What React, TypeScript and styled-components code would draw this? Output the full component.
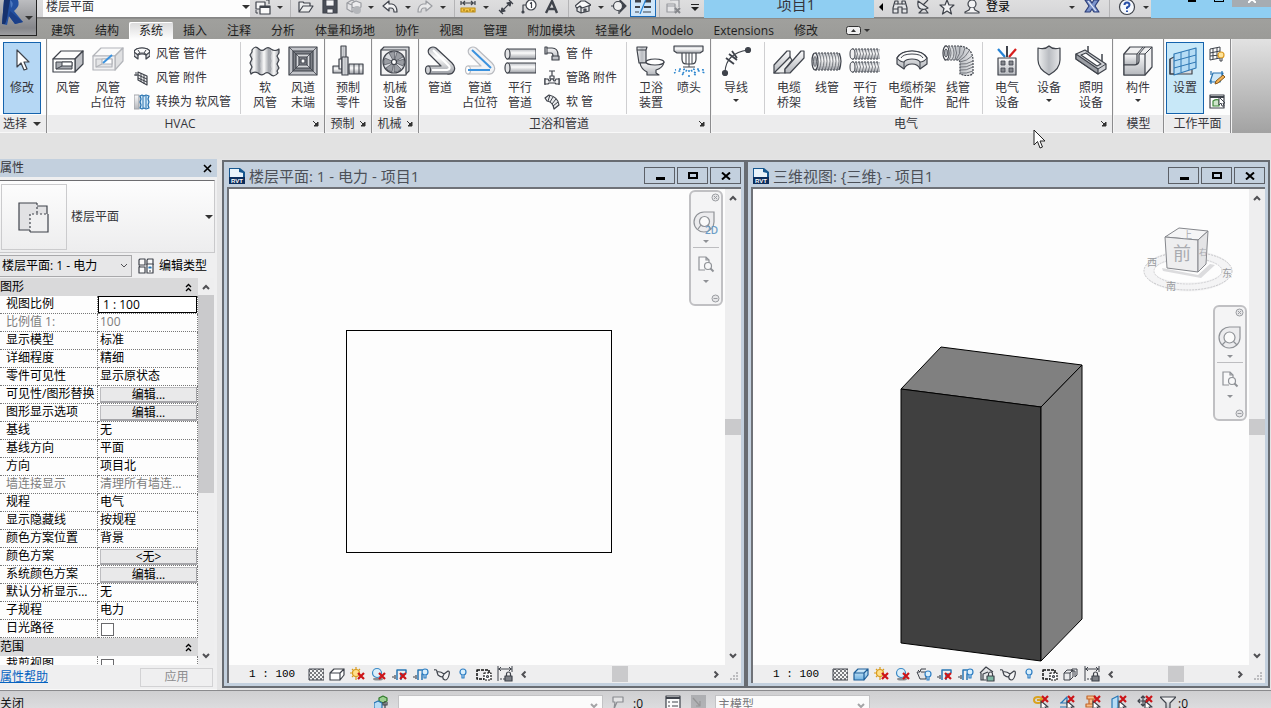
import React from "react";
import styled, { createGlobalStyle } from "styled-components";

const INK = "#3f434b";
const FRAME = "#c3d0de";

const Global = createGlobalStyle`
  * { box-sizing: border-box; }
  body {
    margin: 0;
    overflow: hidden;
    font-family: "Open Sans", "Noto Sans CJK SC", sans-serif;
    font-size: 12px;
    line-height: 16px;
    color: #35353b;
    background: #e4e4e5;
  }
  button, input, select { font: inherit; color: inherit; margin: 0; padding: 0; border: 0; background: none; border-radius: 0; }
  button { cursor: default; }
  svg { display: block; flex: none; }
`;

/* ---------- shared drawing helpers ---------- */

type KidsProps = { children?: React.ReactNode };

const Ico = ({ s = 16, children }: KidsProps & { s?: number }) => (
  <svg width={s} height={s} viewBox={`0 0 ${s} ${s}`} fill="none" stroke={INK} strokeWidth="1.2" strokeLinejoin="round" aria-hidden="true">
    {children}
  </svg>
);

const Defs = styled.svg`
  position: absolute;
`;

const Gradients = () => (
  <Defs width="0" height="0" aria-hidden="true">
    <defs>
      <linearGradient id="steel" x1="0" y1="0" x2="0" y2="1">
        <stop offset="0" stopColor="#fafafb" />
        <stop offset="1" stopColor="#b4b7bc" />
      </linearGradient>
      <linearGradient id="tube" x1="0" y1="0" x2="0" y2="1">
        <stop offset="0" stopColor="#b9bcc1" />
        <stop offset="0.4" stopColor="#fcfcfc" />
        <stop offset="1" stopColor="#9a9da3" />
      </linearGradient>
      <linearGradient id="steelSide" x1="0" y1="0" x2="1" y2="0">
        <stop offset="0" stopColor="#eeeff0" />
        <stop offset="0.5" stopColor="#b9bcc1" />
        <stop offset="1" stopColor="#e6e7e9" />
      </linearGradient>
      <linearGradient id="bands" x1="0" y1="0" x2="10" y2="0" gradientUnits="userSpaceOnUse" spreadMethod="repeat">
        <stop offset="0" stopColor="#9fa2a8" />
        <stop offset="0.5" stopColor="#fbfbfb" />
        <stop offset="1" stopColor="#9fa2a8" />
      </linearGradient>
      <linearGradient id="sky" x1="0" y1="0" x2="0" y2="1">
        <stop offset="0" stopColor="#dcf0fb" />
        <stop offset="1" stopColor="#6fb2e2" />
      </linearGradient>
      <pattern id="hatch" width="4" height="4" patternUnits="userSpaceOnUse">
        <rect width="4" height="4" fill="#f4f4f4" />
        <path d="M0 0h2v2H0zM2 2h2v2H2z" fill="#7a7c80" stroke="none" />
      </pattern>
    </defs>
  </Defs>
);

const RedCross = ({ x, y }: { x: number; y: number }) => (
  <path d={`M${x} ${y}l6 6M${x + 6} ${y}l-6 6`} stroke="#cc1418" strokeWidth="2.2" />
);
const Bulb = ({ x, y }: { x: number; y: number }) => (
  <g stroke="#2f7fc4" fill="#d9effc">
    <circle cx={x} cy={y} r="3" />
    <path d={`M${x - 1} ${y + 3}v3h2v-3`} />
  </g>
);
const Lock = ({ x, y, c = "#7d8086" }: { x: number; y: number; c?: string }) => (
  <g>
    <path d={`M${x + 1.5} ${y + 3}v-2a2 2 0 0 1 4 0v2`} />
    <rect x={x} y={y + 3} width="7" height="5" fill={c} />
  </g>
);

/* ---------- large ribbon icons (32 px) ---------- */

const L = {
  cursor: (
    <Ico s={32}>
      <path d="M11 5v17l4-4 3 7 3-1-3-7h5z" fill="#fff" />
    </Ico>
  ),
  duct: (
    <Ico s={32}>
      <path d="M1 14l8-8h22l-8 8z" fill="#fdfdfd" />
      <path d="M31 6v13l-8 8V14z" fill="#c0c2c7" />
      <path d="M1 14h22v13H1z" fill="#fdfdfd" />
      <path d="M4 17h16v7H4z" fill="#a9acb2" strokeWidth="1" />
      <path d="M10 17h10v4H10z" fill="#fff" strokeWidth="1" />
      <path d="M4 24l6-3" strokeWidth="1" />
    </Ico>
  ),
  ductPh: (
    <Ico s={32}>
      <g stroke="#b2b4b9">
        <path d="M1 11l8-8h22l-8 8z" fill="#fafafa" />
        <path d="M31 3v13l-8 9V11z" fill="#dfe0e2" />
        <path d="M1 11h22v14H1z" fill="#f1f1f2" />
        <path d="M4 14h16v8H4z" fill="#e4e5e7" />
        <path d="M10 14h10v5H10zM4 22l6-3" fill="#fff" />
      </g>
      <path d="M11 18l9-8" stroke="#3b92de" strokeWidth="2" />
    </Ico>
  ),
  flexDuct: (
    <Ico s={32}>
      <path
        d="M3 5q3-5 7-1 3 3 6 0 3-3 6 0 4 3 8 0v4l-2 3 2 4-2 4 2 4-2 3 1 2q-4 5-8 1-3-3-6 0-3 2-6-1-4-2-7 1l-1-3 2-4-2-4 2-4-2-4 2-3z"
        fill="url(#bands)"
      />
      <path d="M10 5l1 3-1 4 1 4-1 4 1 4-1 3M21 5l1 3-1 4 1 4-1 4 1 4-1 3" stroke="#a1a4aa" strokeWidth="1" />
    </Ico>
  ),
  terminal: (
    <Ico s={32}>
      <rect x="2" y="2" width="28" height="28" fill="#c3c5ca" />
      <rect x="6" y="6" width="20" height="20" fill="#7d8087" />
      <rect x="9" y="9" width="14" height="14" fill="#d6d8db" />
      <rect x="12" y="12" width="8" height="8" fill="#8a8d94" />
      <rect x="14" y="14" width="4" height="4" fill="#fff" />
      <path d="M2 2l10 10M30 2L20 12M2 30l10-10M30 30L20 20" strokeWidth=".8" />
    </Ico>
  ),
  fab: (
    <Ico s={32}>
      <path d="M9 1h5v14H9z" fill="url(#steelSide)" />
      <path d="M1 21h9v7H1z" fill="url(#tube)" />
      <path d="M17 19h14v10H17z" fill="url(#tube)" />
      <path d="M7 14h3v10H7z" fill="#f0f0f1" />
      <path d="M10 12h6v18h-6z" fill="url(#steelSide)" />
      <path d="M22 19v10M27 19v10" strokeWidth="1" />
    </Ico>
  ),
  fan: (
    <Ico s={32}>
      <path d="M2 5l3-3h25v24l-4 4H2z" fill="#d3d5d8" />
      <rect x="2" y="5" width="25" height="25" fill="#f2f2f3" />
      <circle cx="15" cy="17" r="11" fill="#dadce0" />
      <g fill="#9a9da3" strokeWidth=".6">
        <path d="M15 17L10 8q4-2 6-1z" />
        <path d="M15 17l3-10q5 1 6 5z" />
        <path d="M15 17l10-3q1 4-1 7z" />
        <path d="M15 17l7 7q-3 4-7 3z" />
        <path d="M15 17l-2 10q-4-1-6-4z" />
        <path d="M15 17L5 20q-1-5 1-7z" />
      </g>
      <circle cx="15" cy="17" r="2.500" fill="#fff" />
    </Ico>
  ),
  pipe: (
    <Ico s={32}>
      <path d="M5 9q-2-4 1-6t6 0l16 15q4 4 2 8t-7 3H4v-8h13z" fill="url(#tube)" />
      <path d="M9 5l16 16q2 3-2 4H8" stroke="#fff" strokeWidth="2" />
      <ellipse cx="4" cy="25" rx="2.500" ry="4" fill="#d0d2d6" />
    </Ico>
  ),
  pipePh: (
    <Ico s={32}>
      <g stroke="#b9bbc0">
        <path d="M5 9q-2-4 1-6t6 0l16 15q4 4 2 8t-7 3H4v-8h13z" fill="#f1f2f4" />
        <ellipse cx="4" cy="25" rx="2.500" ry="4" fill="#fff" />
      </g>
      <path d="M8 5l19 18M4 25h22" stroke="#3b92de" strokeWidth="2" />
    </Ico>
  ),
  parallelPipe: (
    <Ico s={32}>
      <path d="M3 4h29v10H3z" fill="url(#tube)" />
      <ellipse cx="3.500" cy="9" rx="2.500" ry="5" fill="#e3e4e6" />
      <path d="M3 18h29v10H3z" fill="url(#tube)" />
      <ellipse cx="3.500" cy="23" rx="2.500" ry="5" fill="#e3e4e6" />
    </Ico>
  ),
  toilet: (
    <Ico s={32}>
      <path d="M2 2h10l-1 3v13H4L2 5z" fill="url(#steelSide)" />
      <path d="M2 5h9" strokeWidth="1" />
      <path d="M5 18h7l17-1q-1 6-8 8v3l3 2H12v-3q-6-3-7-9z" fill="url(#steel)" />
      <ellipse cx="20" cy="17" rx="9" ry="3" fill="#fff" />
    </Ico>
  ),
  sprinkler: (
    <Ico s={32}>
      <path d="M1 1h29v5l-3 2H4L1 6z" fill="url(#tube)" />
      <path d="M9 8v6q0 5 4 5h6q4 0 4-5V8" />
      <path d="M13 8v11M19 8v11M16 8v14M10 22h12" strokeWidth="1" />
      <g stroke="#2c86cf" strokeWidth="1.500" strokeDasharray="2 3">
        <path d="M12 24L1 28M14 25l-7 7M16 25v7M18 25l6 7M20 24l12 4M8 24l-6 1M24 24l7 1M11 27l-3 3M21 27l4 2" />
      </g>
    </Ico>
  ),
  wire: (
    <Ico s={32}>
      <path d="M5 27Q6 8 28 5" />
      <circle cx="5" cy="28" r="2.500" fill={INK} />
      <circle cx="28" cy="5" r="2.500" fill={INK} />
      <path d="M6 13l8 6M9 9l8 6M12 6l5 7" strokeWidth="1.800" />
    </Ico>
  ),
  tray: (
    <Ico s={32}>
      <path d="M1 20L14 6h3v6L6 24v4H1z" fill="url(#steel)" />
      <path d="M6 23l11-11 2 3-7 9v4H1z" fill="#eceded" />
      <path d="M14 22L28 6h3v7L17 28h-5v-4z" fill="url(#steel)" />
    </Ico>
  ),
  conduit: (
    <Ico s={32}>
      <rect x="3" y="8" width="27" height="17" rx="2" fill="url(#tube)" stroke="none" />
      <path d="M4 8h24M4 25h24" strokeDasharray="2 1" />
      <g strokeWidth=".9" stroke="#6a6d74">
        {[8, 11, 14, 17, 20, 23, 26].map((x) => (
          <path key={x} d={`M${x} 8q4 8 0 17`} />
        ))}
      </g>
      <path d="M28 8q4 8 0 17" />
      <ellipse cx="4" cy="16.500" rx="3" ry="8.500" fill="#f0f0f1" />
      <ellipse cx="4" cy="16.500" rx="1.500" ry="5" fill="#b4b7bc" strokeWidth=".8" />
    </Ico>
  ),
  parallelConduit: (
    <Ico s={32}>
      {[4, 17].map((y) => (
        <g key={y} strokeWidth="1">
          <rect x="3" y={y} width="28" height="10" fill="url(#tube)" stroke="none" />
          <path d={`M3 ${y}h27M3 ${y + 10}h27`} strokeDasharray="2 1" />
          {[7, 10, 13, 16, 19, 22, 25, 28].map((x) => (
            <path key={x} d={`M${x} ${y}q3 5 0 10`} stroke="#6a6d74" strokeWidth=".9" />
          ))}
          <ellipse cx="3.500" cy={y + 5} rx="2.500" ry="5" fill="#f0f0f1" />
        </g>
      ))}
    </Ico>
  ),
  trayFitting: (
    <Ico s={32}>
      <path d="M1 13q4-7 15-7t15 7v6l-7 5q-2-5-8-5t-8 5l-7-5z" fill="url(#steel)" />
      <path d="M1 13q3 4 7 4 2-3 8-3t8 3q4 0 7-4-4-7-15-7T1 13z" fill="#fbfbfb" />
      <path d="M5 13q2-4 11-4t11 4M8 17v6M24 17v6" strokeWidth="1" />
    </Ico>
  ),
  conduitFitting: (
    <Ico s={32}>
      <path d="M3 1h14q14 1 14 15v13q-6 3-13 0V18q0-3-3-3H3z" fill="url(#steelSide)" strokeDasharray="2 1" />
      <g strokeWidth=".9" stroke="#6a6d74">
        <path d="M7 1q4 7 0 14M10 1q4 7 0 14M13 1q3 7 0 14M18 1q1 8-4 14M23 3q-1 7-7 12M27 6q-3 6-10 10M30 11q-5 5-12 6M31 16q-7 4-13 3M31 19q-7 4-13 3M31 22q-7 4-13 3M31 26q-7 3-13 2" />
      </g>
      <ellipse cx="4" cy="8" rx="3" ry="7" fill="#f0f0f1" />
      <ellipse cx="4" cy="8" rx="1.500" ry="4" fill="#b4b7bc" strokeWidth=".8" />
    </Ico>
  ),
  elecEquip: (
    <Ico s={32}>
      <path d="M16 12V1" strokeWidth="2" />
      <path d="M14 12L7 4" stroke="#2583d6" strokeWidth="2.200" />
      <path d="M18 12l7-8" stroke="#d81e1e" strokeWidth="2.200" />
      <rect x="7" y="13" width="18" height="17" fill="url(#steel)" />
      <g fill="#84878d" strokeWidth=".8">
        <rect x="10" y="16" width="4" height="4" />
        <rect x="18" y="16" width="4" height="4" />
        <rect x="10" y="23" width="4" height="4" />
        <rect x="18" y="23" width="4" height="4" />
      </g>
    </Ico>
  ),
  shield: (
    <Ico s={32}>
      <path d="M16 1q-4 4-11 2v12q0 9 11 15 11-6 11-15V3q-7 2-11-2z" fill="url(#steelSide)" />
    </Ico>
  ),
  light: (
    <Ico s={32}>
      <path d="M13 1v8M27 9v10" strokeWidth="1.500" />
      <path d="M1 9l9-4 21 14v5l-8 5L1 14z" fill="#d1d3d7" />
      <path d="M1 9l22 15v5L1 14z" fill="#9b9ea4" />
      <path d="M6 10l5-2 15 11-4 2z" fill="#fff" />
      <path d="M23 24l8-5" strokeWidth="1" />
    </Ico>
  ),
  component: (
    <Ico s={32}>
      <path d="M2 9l6-7h22v20l-7 8H2z" fill="#f0f0f1" />
      <path d="M2 9h13v9q0 2-2 2H2z" fill="url(#steel)" />
      <path d="M2 20h11q4-1 4-4V9h6v21H2z" fill="url(#steel)" />
      <path d="M15 9l6-7M23 9l7-7M17 9l6-7" strokeWidth="1" />
    </Ico>
  ),
  workplane: (
    <Ico s={32}>
      <path d="M1 14l4-2h18v17H1z" fill="#d8dce1" />
      <path d="M5 9l22-6v20l-22 7z" fill="#b5dcf5" stroke="#2f78b4" />
      <path d="M5 16l22-6M5 23l22-6M12 7v20M20 5v20" stroke="#2f78b4" strokeWidth="1" />
      <path d="M1 14v15h4" />
    </Ico>
  ),
};

/* ---------- small ribbon icons (16 px) ---------- */

const S = {
  ductFitting: (
    <Ico>
      <path d="M0 6q1-4 8-4t8 4v4l-4 3V9q-1-1-4-1T4 9v4l-4-3z" fill="#d4d6d9" />
      <path d="M0 6l4 3q0-2 4-2t4 2l4-3q-1-4-8-4T0 6z" fill="#fbfbfb" />
      <path d="M4 4l2 3M12 4l-2 3" strokeWidth="1" />
    </Ico>
  ),
  ductAccessory: (
    <Ico>
      <path d="M4 2l9 4v9l-9-5z" fill="#f0f0f1" />
      <path d="M0 5h4M4 5l9 4M4 8l9 4M7 3v9M10 5v9M2 2v4" strokeWidth="1" />
    </Ico>
  ),
  convert: (
    <Ico>
      <path d="M0 1h5v14H0z" fill="url(#steel)" stroke="#a3a6ab" />
      <path d="M6 2l2-1 2 1 2-1 3 1-1 3 1 3-1 3 1 3-3 1-2-1-2 1-2-1 1-3-1-3 1-3z" fill="#d7ecfa" stroke="#2671ae" />
      <path d="M9 2v12M12 2v12" stroke="#2671ae" strokeWidth="1" />
    </Ico>
  ),
  pipeFitting: (
    <Ico>
      <path d="M1 1h2v1h5q6 0 6 7v1h1v4H8v-4h1q0-3-2-3H3v1H1z" fill="url(#steel)" />
      <path d="M3 2v5M9 10h5" strokeWidth="1" />
    </Ico>
  ),
  pipeAccessory: (
    <Ico>
      <path d="M5 1h6M8 1v5M6 6h4v3H6zM1 8v7M15 8v7" />
      <path d="M1 9h3l1 2h1l1-2h2l1 2h1l1-2h3v5h-3l-1-1H5l-1 1H1z" fill="#f3f3f4" />
    </Ico>
  ),
  flexPipe: (
    <Ico>
      <path d="M1 4l4-3q9 2 10 10l-5 4Q9 8 3 7z" fill="#e8e9eb" />
      <path d="M6 1L4 7M9 3L6 8M12 5L8 10M14 8l-5 4" strokeWidth="1" />
    </Ico>
  ),
  showPlane: (
    <Ico>
      <path d="M1 3l10-2v11L1 14zM1 7l10-2M1 10l10-1M4 2v11M8 2v11" strokeWidth="1" />
      <circle cx="12" cy="9" r="3" fill="#ffe49a" stroke="#dc9a22" />
      <path d="M11 12v3h2v-3" strokeWidth="1" />
    </Ico>
  ),
  refPlane: (
    <Ico>
      <path d="M4 3h10l-3 9H1z" fill="#cfe8f8" stroke="#2671ae" />
      <path d="M2 1v4M13 1v4M2 10v4" stroke="#2671ae" />
      <path d="M6 14l1-3 7-6 2 2-7 6z" fill="#f3b052" stroke="#8a5a1c" strokeWidth="1" />
    </Ico>
  ),
  viewer: (
    <Ico>
      <rect x="1" y="1" width="14" height="13" fill="#fff" />
      <path d="M1 3h14" strokeWidth="2" />
      <path d="M4 7q3-2 6-1v6H4z" fill="#cfe6cc" stroke="#3f8a3b" />
      <path d="M10 3v8l2-2 1 3h2l-1-3h2z" fill="#fff" strokeWidth="1" />
    </Ico>
  ),
};

/* ---------- quick access icons ---------- */

const Q = {
  link: (
    <Ico>
      <path d="M1 3h9v7H1z" fill="#f6f6f7" />
      <path d="M5 7h10v8H5z" fill="#fafafa" />
      <path d="M5 8h10" strokeWidth="2" />
      <path d="M11 1h3v4M1 11v3h2" strokeWidth="1" />
    </Ico>
  ),
  open: (
    <Ico>
      <path d="M1 13V3h4l1 1h6v3M1 13l4-6h10l-4 6z" fill="#eceded" />
    </Ico>
  ),
  save: (
    <Ico>
      <path d="M1 1h14v13H1z" fill="#4a4e57" />
      <path d="M4 1h8v6H4zM5 10h6v4H5z" fill="#f4f4f5" strokeWidth=".8" />
    </Ico>
  ),
  sync: (
    <Ico>
      <g stroke="#9a9ca1">
        <path d="M1 4l5-3 5 3v6l-5 3-5-3z" fill="#e4e4e6" />
        <path d="M6 4l4-2 5 2v4l-4 2-5-2zM1 4l5 2M6 6v7" fill="#ececee" />
        <circle cx="11" cy="11" r="4" fill="#b4b6ba" stroke="none" />
      </g>
    </Ico>
  ),
  undo: (
    <Ico>
      <path d="M1 7l6-5v3h3q5 1 5 8h-3q0-4-3-4H7v3z" fill="#f3f3f4" />
    </Ico>
  ),
  redo: (
    <Ico>
      <path d="M15 7L9 2v3H6q-5 1-5 8h3q0-4 3-4h2v3z" fill="#e9e9ea" stroke="#9b9da2" />
    </Ico>
  ),
  measure: (
    <Ico>
      <path d="M1 4h14M1 2v4M15 2v4M3 4l2-2M3 4l2 2M13 4l-2-2M13 4l-2 2" />
      <rect x="1" y="9" width="14" height="4" fill="#f5c54a" stroke="#c08f17" />
      <path d="M4 10v2M7 11v2M10 10v2M13 11v2" stroke="#a67c12" />
    </Ico>
  ),
  dim: (
    <Ico>
      <path d="M3 13L13 3M1 11l4 4M11 1l4 4" />
      <path d="M3 13l1-4 3 3zM13 3l-1 4-3-3z" fill={INK} />
    </Ico>
  ),
  tag: (
    <Ico>
      <circle cx="10" cy="6" r="5" fill="#fff" />
      <path d="M9 4.500l1.500-1V9M5 6H2v7" />
      <circle cx="2" cy="13" r="1" fill={INK} />
    </Ico>
  ),
  text: (
    <Ico>
      <path d="M2 14L8 2l5 12M5 10h6" strokeWidth="2.400" />
    </Ico>
  ),
  home: (
    <Ico>
      <path d="M2 7l4 1v6l-4-2zM6 8l8-2v6l-8 2z" fill="#e2e3e5" />
      <path d="M0 7l6-5h4l6 4-9 3-2-2-3 2z" fill="#fafafa" />
      <path d="M9 13v-3h2v3" fill="#6a6d74" />
    </Ico>
  ),
  section: (
    <Ico>
      <path d="M9 1l6 6-6 6z" fill={INK} />
      <circle cx="7" cy="7" r="4.500" fill="#eee" />
      <path d="M0 7h2M8 12v3" />
    </Ico>
  ),
  thin: (
    <Ico>
      <path d="M0 2h6M10 2h6" strokeWidth="3" />
      <path d="M0 8h5M9 8h7" strokeWidth="2" />
      <path d="M0 13h4M8 13h8" />
      <path d="M11 0L5 15" stroke="#2583d6" />
    </Ico>
  ),
  closeHidden: (
    <Ico>
      <g stroke="#9a9ca1">
        <path d="M4 1h9v7M1 5h8v8H1zM1 7h8" fill="#e4e4e6" />
      </g>
      <path d="M9 9l5 5M14 9l-5 5" stroke="#85878c" strokeWidth="2" />
    </Ico>
  ),
  binoculars: (
    <Ico>
      <path d="M3 2h3v3h4V2h3l2 7v5h-5V8H6v6H1V9z" fill="#e6e7e9" />
      <path d="M1 10h5M10 10h5M3 5h3M10 5h3" />
    </Ico>
  ),
  satellite: (
    <Ico>
      <path d="M3 2q-1 7 3 8t7-1z" fill="#e6e7e9" />
      <path d="M8 6l5-5M8 10l-4 4h9l-3-4" />
    </Ico>
  ),
  star: (
    <Ico>
      <path d="M8 1l2 5h5l-4 3.500 1.500 5.500L8 12l-4.500 3L5 9.500 1 6h5z" fill="#f3f3f4" />
    </Ico>
  ),
  user: (
    <Ico>
      <circle cx="8" cy="5" r="4" fill="#f3f3f4" />
      <path d="M6 9l-1 2-4 2v1h14v-1l-4-2-1-2" fill="#f3f3f4" />
    </Ico>
  ),
  exchange: (
    <Ico>
      <path d="M1 1h5l2 3 2-3h5l-4 6 4 6h-5l-2-3-2 3H1l4-6z" fill="#7b93cc" stroke="#2b3d78" />
      <path d="M4 2l8 10" stroke="#e8edf8" />
    </Ico>
  ),
  help: (
    <Ico s={18}>
      <circle cx="9" cy="9" r="7.500" fill="#f5f8fd" />
      <path d="M6.500 7q0-2.500 2.500-2.500T11.500 7Q11.500 8.500 9 9.500V11M9 12.500V14" stroke="#2a50a8" strokeWidth="2" />
    </Ico>
  ),
};

/* ---------- view control icons ---------- */

const pipeRun = (
  <g>
    <path d="M0 11h2M3 9v4" />
    <path d="M5 14V4h9v3M9 14V8h3" stroke="#2877b5" strokeWidth="1.500" />
  </g>
);

const V = {
  detail: (
    <Ico>
      <rect x="1" y="3" width="15" height="11" fill="url(#hatch)" strokeWidth="1" />
    </Ico>
  ),
  box: (
    <Ico>
      <path d="M1 7l4-4h10l-4 4zM15 3v6l-4 5V7zM1 7h10v7H1z" fill="#fff" />
    </Ico>
  ),
  boxBlue: (
    <Ico>
      <path d="M1 7l4-4h10l-4 4zM15 3v6l-4 5V7zM1 7h10v7H1z" fill="url(#sky)" stroke="#1e5f99" />
    </Ico>
  ),
  sun: (
    <Ico>
      <path d="M6 1v2M6 11v3M0 7h2M2 3l1 1M10 3L9 4M2 11l1-1" stroke="#d99a1b" />
      <circle cx="6" cy="7" r="3.500" fill="#ffe08a" stroke="#d99a1b" />
      <RedCross x={8} y={7} />
    </Ico>
  ),
  shadow: (
    <Ico>
      <ellipse cx="7" cy="13" rx="5" ry="1.500" fill="#8b8d91" stroke="none" />
      <circle cx="6" cy="7" r="4.500" fill="#dceffb" stroke="#3b8ac6" />
      <RedCross x={8} y={7} />
    </Ico>
  ),
  render: (
    <Ico>
      <path d="M1 6h3l1-3h5M1 6l3 7h6V6M5 6h5M2 4l2 2" fill="#e4e5e7" strokeWidth="1" />
      <Bulb x={12} y={8} />
    </Ico>
  ),
  crop: (
    <Ico>
      {pipeRun}
      <RedCross x={8} y={7} />
    </Ico>
  ),
  cropShow: (
    <Ico>
      {pipeRun}
      <Bulb x={12} y={6} />
    </Ico>
  ),
  lock3d: (
    <Ico>
      <path d="M1 7l6-6 7 5M2 7v7h5M4 14V8l5-2" fill="#e4e5e7" />
      <Lock x={8} y={7} c="#7fb8a4" />
    </Ico>
  ),
  glasses: (
    <Ico>
      <path d="M0 4q3-1 3 2l1 3q5 4 6-1l4-3q2 0 1 4-1 5-4 5-3-1-2-4M3 6q3-1 7 2" fill="#f3f3f4" />
    </Ico>
  ),
  bulb: (
    <Ico>
      <Bulb x={8} y={6} />
    </Ico>
  ),
  temp: (
    <Ico>
      <rect x="1" y="4" width="12" height="9" strokeDasharray="3 1" strokeWidth="1.500" stroke="#111" />
      <rect x="8" y="7" width="7" height="7" fill="#fff" strokeDasharray="2 1" stroke="#111" />
      <circle cx="11.500" cy="10.500" r="1" />
    </Ico>
  ),
  displace: (
    <Ico>
      <path d="M1 7h6v7H1zM1 7l3-3h6M7 7l3-3v7l-3 3M9 3h5v6l-2 2V5H8z" fill="#e9eaec" strokeWidth="1" />
    </Ico>
  ),
  constrain: (
    <Ico>
      <path d="M1 0v15M15 0v6M1 3h14M4 1L2 3l2 2M12 1l2 2-2 2" strokeWidth="1" />
      <path d="M3 13h5" strokeDasharray="2 1" />
      <Lock x={8} y={7} />
    </Ico>
  ),
};

/* ---------- basic controls ---------- */

const Shell = styled.div`
  display: flex;
  flex-direction: column;
  height: 100vh;
  overflow: hidden;
`;

const Caret = styled.span<{ $size?: number }>`
  display: block;
  flex: none;
  width: 0;
  height: 0;
  border: ${(p) => p.$size ?? 3}px solid transparent;
  border-top-color: #333;
  border-bottom: 0;
`;

const Slot = styled.button<{ $w: number; $on?: boolean }>`
  display: flex;
  flex: none;
  align-items: center;
  justify-content: center;
  width: ${(p) => p.$w}px;
  height: 20px;
  ${(p) => p.$on && "background:#cfe6fa;box-shadow:inset 0 0 0 1px #1c6bb8;"}
`;

const Divider = styled.span<{ $w: number }>`
  flex: none;
  width: ${(p) => p.$w}px;
  height: 20px;
  background: linear-gradient(#b4b4b6, #b4b4b6) center / 1px 100% no-repeat;
`;

const Drop = ({ w, label }: { w: number; label: string }) => (
  <Slot $w={w} aria-label={label}>
    <Caret />
  </Slot>
);

/* ---------- title bar and tabs ---------- */

const Head = styled.header`
  display: flex;
  flex: none;
  height: 39px;
  background: linear-gradient(#a5a5a2, #9b9b98);
`;

const AppButton = styled.button`
  display: flex;
  flex: none;
  align-items: center;
  width: 37px;
  height: 36px;
  border: 1px solid #222;
  border-width: 0 1px 1px 0;
  background: linear-gradient(#bcbdc0, #85868a 80%, #9c9da0);
`;

const HeadColumn = styled.div`
  flex: 1;
  min-width: 0;
`;

const TitleBar = styled.div`
  display: flex;
  height: 18px;
  overflow: hidden;
  background: #8fcef2;
`;

const ToolGroup = styled.div`
  display: flex;
  flex: none;
  align-items: flex-end;
  background: linear-gradient(#dededf, #d4d4d6);
  border-bottom: 1px solid #858585;
`;

const ViewSelect = styled.select`
  appearance: none;
  width: 207px;
  height: 20px;
  margin-left: 6px;
  padding-left: 3px;
  background: #fdfdfd;
`;

const SelectWrap = styled.span`
  display: flex;
  align-items: center;
`;

const SelectCaret = styled(Caret)`
  margin: 0 0 0 -8px;
  pointer-events: none;
`;

const DocTitle = styled.h1`
  flex: 1;
  margin: 0;
  padding-left: 14px;
  align-self: flex-end;
  font-size: 15px;
  font-weight: 400;
  line-height: 20px;
  height: 24px;
  text-align: center;
  white-space: nowrap;
`;

const SignIn = styled.button`
  width: 80px;
  height: 20px;
  padding-left: 2px;
  text-align: left;
  color: #000;
`;

const WinControls = styled.div`
  display: flex;
  flex: none;
  align-items: flex-start;
  justify-content: flex-end;
  width: 120px;
`;

const WinControl = styled.button<{ $close?: boolean }>`
  display: flex;
  justify-content: center;
  width: ${(p) => (p.$close ? 39 : 27)}px;
  height: 7px;
  overflow: hidden;
  background: ${(p) => (p.$close ? "#a6acb2" : "none")};
`;

const TabList = styled.nav`
  display: flex;
  align-items: flex-end;
  height: 21px;
  padding-left: 4px;
  border-top: 1px solid #8d8d8b;
`;

const Tab = styled.button<{ $active?: boolean }>`
  flex: none;
  height: 17px;
  padding: 0 10px;
  line-height: 14px;
  white-space: nowrap;
  color: #1e1e1e;
  border-radius: 2px 2px 0 0;
  ${(p) => p.$active && "background:linear-gradient(#d9d9da,#fdfdfd);box-shadow:inset 1px 1px 0 #fff;"}
`;

const Minimize = styled.button`
  display: flex;
  align-items: center;
  gap: 3px;
  height: 17px;
  margin-left: 18px;
`;

/* ---------- ribbon ---------- */

const Ribbon = styled.section`
  display: flex;
  flex: none;
  height: 94px;
  background: linear-gradient(#e2e2e2, #a2a2a2);
`;

const Panel = styled.div`
  display: flex;
  flex: none;
  flex-direction: column;
  border-right: 1px solid #8c8c8e;
  background: #fdfdfd;
  box-shadow: 1px 0 0 #f4f4f4;
  margin-right: 1px;
`;

const PanelBody = styled.div<{ $pl?: number; $pr?: number }>`
  display: flex;
  height: 76px;
  padding: 3px ${(p) => p.$pr ?? 0}px 0 ${(p) => p.$pl ?? 0}px;
`;

const PanelTitle = styled.div`
  display: flex;
  align-items: center;
  height: 18px;
  background: #ececed;
  border-bottom: 1px solid #f8f8f8;
  white-space: nowrap;
`;

const PanelName = styled.span`
  flex: 1;
  text-align: center;
`;

const Launcher = styled.button`
  width: 12px;
  height: 16px;
  display: flex;
  align-items: center;
`;

const Rule = styled.span<{ $before?: number }>`
  flex: none;
  width: 1px;
  height: 72px;
  margin: 0 5px 0 ${(p) => p.$before ?? 0}px;
  background: #cfcfd1;
`;

const BigButton = styled.button<{ $w: number; $tone?: "blue" | "cyan" }>`
  display: flex;
  flex: none;
  flex-direction: column;
  align-items: center;
  justify-content: flex-start;
  width: ${(p) => p.$w}px;
  height: 72px;
  padding-top: 3px;
  ${(p) => p.$tone === "blue" && "background:#b5d7f4;box-shadow:inset 0 0 0 1px #1563ad;"}
  ${(p) => p.$tone === "cyan" && "background:#c8e8f8;box-shadow:inset 0 0 0 1px #1563ad;"}
`;

const BigLabel = styled.span`
  margin: 3px 0 4px;
  line-height: 15px;
  text-align: center;
  white-space: pre-line;
  width: max-content;
`;

const SmallList = styled.div<{ $w: number; $pl: number }>`
  flex: none;
  width: ${(p) => p.$w}px;
  padding-left: ${(p) => p.$pl}px;
`;

const SmallButton = styled.button`
  display: flex;
  align-items: center;
  gap: 6px;
  height: 24px;
  white-space: nowrap;
`;

type BigProps = { icon: React.ReactNode; w: number; label: string; drop?: boolean; tone?: "blue" | "cyan" };
const Big = ({ icon, w, label, drop, tone }: BigProps) => (
  <BigButton $w={w} $tone={tone}>
    {icon}
    <BigLabel>{label}</BigLabel>
    {drop && <Caret $size={3} />}
  </BigButton>
);

const Small = ({ icon, label }: { icon: React.ReactNode; label: string }) => (
  <SmallButton>
    {icon}
    {label}
  </SmallButton>
);

const RibbonPanel = ({ name, launch, pl, pr, children }: KidsProps & { name: string; launch?: boolean; pl?: number; pr?: number }) => (
  <Panel>
    <PanelBody $pl={pl} $pr={pr}>
      {children}
    </PanelBody>
    <PanelTitle>
      <PanelName>{name}</PanelName>
      {launch && (
        <Launcher aria-label={name + " 设置"}>
          <svg width="7" height="7" viewBox="0 0 7 7" fill="none" stroke="#333">
            <path d="M1 1l4 4" />
            <path d="M6 2v4H2z" fill="#333" />
          </svg>
        </Launcher>
      )}
    </PanelTitle>
  </Panel>
);

const SelectTitle = styled(PanelTitle)`
  gap: 6px;
  padding-left: 3px;
`;

const OptionsBar = styled.div`
  flex: none;
  height: 26px;
  background: #e2e2e2;
`;

/* ---------- properties palette ---------- */

const Workspace = styled.main`
  display: flex;
  flex: 1;
  min-height: 0;
  gap: 5px;
  padding-right: 1px;
`;

const Palette = styled.aside`
  display: flex;
  flex: none;
  flex-direction: column;
  width: 217px;
  min-height: 0;
  background: #efeff0;
  border-bottom: 1px solid #f8f8f8;
`;

const PaletteTitle = styled.div`
  display: flex;
  align-items: center;
  justify-content: space-between;
  height: 18px;
  padding-right: 5px;
  margin-bottom: 3px;
  background: ${FRAME};
`;

const TypeSelector = styled.button`
  display: flex;
  align-items: center;
  height: 73px;
  padding: 0 1px;
  margin-right: 2px;
  border: 1px solid #c9c9cb;
  border-top-color: #6d6d70;
  border-left: 0;
  background: linear-gradient(#fdfdfd, #ededee);
`;

const Preview = styled.span`
  display: flex;
  align-items: center;
  justify-content: center;
  width: 66px;
  height: 66px;
  margin-right: 4px;
  border: 1px solid #cbcbcd;
`;

const TypeName = styled.span`
  flex: 1;
  text-align: left;
`;

const InstanceRow = styled.div`
  display: flex;
  align-items: center;
  height: 25px;
  padding: 1px 0;
`;

const InstanceSelect = styled.select`
  appearance: none;
  width: 132px;
  height: 22px;
  padding-left: 2px;
  color: #000;
  border: 1px solid #a9a9ab;
  border-left: 0;
  background: #e7e7e8;
`;

const ChevronSlot = styled.span`
  display: block;
  width: 9px;
  margin-left: -13px;
  margin-right: 10px;
  pointer-events: none;
`;

const EditType = styled.button`
  display: flex;
  align-items: center;
  gap: 5px;
  height: 20px;
  color: #000;
`;

const ScrollPane = styled.div`
  display: flex;
  flex: 1;
  min-height: 0;
  margin-right: 3px;
`;

const TableClip = styled.div`
  flex: 1;
  overflow: hidden;
`;

const PropTable = styled.table`
  width: 100%;
  table-layout: fixed;
  border-spacing: 0;
  color: #000;
`;

const NameColumn = styled.col`
  width: 98px;
`;

const GroupCell = styled.th`
  height: 18px;
  padding: 0;
  font-weight: 400;
  background: #d9d9da;
`;

const GroupButton = styled.button`
  display: flex;
  align-items: center;
  justify-content: space-between;
  width: 100%;
  height: 18px;
  padding-right: 6px;
`;

const NameCell = styled.th<{ $dim?: boolean }>`
  height: 18px;
  padding: 0 0 0 6px;
  font-weight: 400;
  line-height: 16px;
  vertical-align: top;
  text-align: left;
  white-space: nowrap;
  overflow: hidden;
  background: #fdfdfd;
  border-bottom: 1px dotted #777;
  border-right: 1px dotted #777;
  color: ${(p) => (p.$dim ? "#7c7c7c" : "#000")};
`;

const ValueCell = styled.td<{ $dim?: boolean }>`
  height: 18px;
  padding: 0 0 0 2px;
  line-height: 16px;
  vertical-align: top;
  white-space: nowrap;
  overflow: hidden;
  background: #fdfdfd;
  border-bottom: 1px dotted #777;
  border-right: 1px dotted #777;
  color: ${(p) => (p.$dim ? "#7c7c7c" : "#000")};
`;

const ScaleCell = styled(ValueCell)`
  padding: 0;
`;

const ScaleInput = styled.input`
  display: block;
  width: 100%;
  height: 17px;
  padding-left: 4px;
  border: 1px solid #000;
  background: #fff;
`;

const CellButton = styled.button`
  display: block;
  width: 100%;
  height: 16px;
  margin-top: 1px;
  line-height: 14px;
  background: #e9e9ea;
  box-shadow: inset -1px -2px 0 #a5a5a9, inset 1px 1px 0 #bdbdc0;
`;

const Check = styled.input`
  display: block;
  appearance: none;
  width: 13px;
  height: 13px;
  margin: 3px 0 0 1px;
  border: 1px solid #6a6a6d;
  background: #fff;
`;

const PaletteFoot = styled.div`
  display: flex;
  flex: none;
  align-items: center;
  justify-content: space-between;
  height: 24px;
  padding-right: 4px;
`;

const HelpLink = styled.a`
  color: #0563c1;
`;

const Apply = styled.button`
  width: 73px;
  height: 19px;
  color: #8c8c8e;
  border: 1px solid #d2d2d4;
`;

/* ---------- scroll bars ---------- */

const Bar = styled.div<{ $dir: "v" | "h" }>`
  display: flex;
  flex: ${(p) => (p.$dir === "h" ? "1" : "none")};
  flex-direction: ${(p) => (p.$dir === "v" ? "column" : "row")};
  align-items: center;
  justify-content: space-between;
  width: ${(p) => (p.$dir === "v" ? "16px" : "auto")};
  background: #eeeeef;
`;

const Step = styled.button<{ $turn: number }>`
  display: flex;
  align-items: center;
  justify-content: center;
  width: 16px;
  height: 17px;
  transform: rotate(${(p) => p.$turn}deg);
`;

const Thumb = styled.span<{ $grow?: boolean }>`
  width: 16px;
  height: ${(p) => (p.$grow ? "198px" : "16px")};
  ${(p) => p.$grow && "margin-bottom:auto;"}
  background: #cacacc;
`;

const Chevron = ({ w = 2 }: { w?: number }) => (
  <svg width="8" height="6" viewBox="0 0 8 6" fill="none" stroke="#505054" strokeWidth={w}>
    <path d="M1 5l3-3 3 3" />
  </svg>
);

const Scroller = ({ dir, grow }: { dir: "v" | "h"; grow?: boolean }) => (
  <Bar $dir={dir}>
    <Step $turn={dir === "v" ? 0 : -90} aria-label="向前滚动">
      <Chevron />
    </Step>
    <Thumb $grow={grow} />
    <Step $turn={dir === "v" ? 180 : 90} aria-label="向后滚动">
      <Chevron />
    </Step>
  </Bar>
);

/* ---------- document windows ---------- */

const Documents = styled.div`
  display: grid;
  flex: 1;
  grid-template-columns: 1fr 1fr;
  min-width: 0;
  padding: 1px 0 2px;
`;

const Doc = styled.article`
  display: flex;
  flex-direction: column;
  min-width: 0;
  padding: 0 3px 3px;
  border: 2px solid #686c72;
  background: ${FRAME};
`;

const DocBar = styled.header`
  display: flex;
  flex: none;
  align-items: center;
  gap: 2px;
  height: 25px;
  padding: 2px 0 0 2px;
`;

const DocName = styled.h2`
  flex: 1;
  margin: 0;
  padding-left: 2px;
  font-size: 15px;
  font-weight: 400;
  line-height: 18px;
  white-space: nowrap;
  color: #4c5058;
`;

const DocButton = styled.button`
  display: flex;
  align-items: center;
  justify-content: center;
  width: 31px;
  height: 17px;
  border: 1px solid #5c6067;
`;

const DocFrame = styled.div`
  display: flex;
  flex: 1;
  flex-direction: column;
  min-height: 0;
  border: 2px solid #6f7278;
  border-width: 2px 0 0 2px;
`;

const DocBody = styled.div`
  display: flex;
  flex: 1;
  min-height: 0;
`;

const Canvas = styled.div`
  position: relative;
  flex: 1;
  min-width: 0;
  overflow: hidden;
  background: #fdfdfd;
`;

const Drawing = styled.svg`
  width: 100%;
  height: 100%;
`;

const NavBar = styled.div<{ $top: number }>`
  position: absolute;
  top: ${(p) => p.$top}px;
  right: 2px;
  display: flex;
  flex-direction: column;
  align-items: center;
  width: 34px;
  height: 116px;
  padding: 1px;
  border: 2px solid #c0c0c3;
  border-radius: 6px;
  background: #f4f4f5;
`;

const NavButton = styled.button`
  display: flex;
  justify-content: center;
  margin: 7px 0 3px;
`;

const NavCorner = styled.button<{ $last?: boolean }>`
  align-self: flex-end;
  ${(p) => p.$last && "margin-top:auto;"}
`;

const NavRule = styled.span`
  width: 26px;
  height: 1px;
  margin-top: 4px;
  background: #bdbdc0;
`;

const PaleCaret = styled(Caret)`
  border-top-color: #8f9196;
`;

const Cube = styled.svg`
  position: absolute;
  top: 33px;
  right: 11px;
`;

const ViewBar = styled.div`
  display: flex;
  flex: none;
  height: 18px;
  background: #eeeeef;
`;

const Scale = styled.button`
  width: 76px;
  padding-left: 20px;
  font-family: "Liberation Mono", monospace;
  font-size: 11px;
  text-align: left;
  white-space: nowrap;
  color: #000;
`;

const ViewTool = styled.button`
  display: flex;
  align-items: center;
  justify-content: center;
  width: 21px;
`;

const Grip = styled.span`
  display: flex;
  align-items: flex-end;
  justify-content: flex-end;
  width: 16px;
  padding: 2px;
`;

const Nav = ({ top, flat }: { top: number; flat?: boolean }) => (
  <NavBar $top={top}>
    <NavCorner aria-label="关闭导航栏">
      <svg width="9" height="9" viewBox="0 0 9 9" fill="#e6e6e8" stroke="#9b9da2">
        <circle cx="4.500" cy="4.500" r="3.500" />
        <path d="M3 3l3 3M6 3L3 6" />
      </svg>
    </NavCorner>
    <NavButton aria-label="控制盘">
      <svg width="28" height="28" viewBox="0 0 28 28" fill="#ececee" stroke="#8f9297" strokeWidth="1.200">
        {flat ? (
          <>
            <path d="M12 3h10v10a10 10 0 1 1-10-10z" />
            <circle cx="12.500" cy="12.500" r="5" fill="#fafafa" />
            <path d="M9 16l-3 4M16 16l3 4" />
            <text x="13" y="25" fontSize="10" fontWeight="600" fill="#6b9cc6" stroke="none">
              2D
            </text>
          </>
        ) : (
          <>
            <path d="M14 3h10v11a10.500 10.500 0 1 1-10-11z" />
            <circle cx="13.500" cy="13.500" r="5.500" fill="#fafafa" />
            <path d="M9.500 17.500L6 21M17.500 17.500L21 21" />
          </>
        )}
      </svg>
    </NavButton>
    <PaleCaret />
    <NavRule />
    <NavButton aria-label="缩放">
      <svg width="18" height="22" viewBox="0 0 18 22" fill="#f8f8f9" stroke="#8f9297" strokeWidth="1.200">
        <path d="M8 15H2V2h7l3 3v3M9 2v3h3" />
        <circle cx="11" cy="11" r="3.500" />
        <path d="M13.500 13.500l3 3" strokeWidth="2" />
      </svg>
    </NavButton>
    <PaleCaret />
    <NavCorner $last aria-label="导航栏选项">
      <svg width="9" height="9" viewBox="0 0 9 9" fill="#e6e6e8" stroke="#9b9da2">
        <circle cx="4.500" cy="4.500" r="3.500" />
        <path d="M2.500 4.500h4" />
      </svg>
    </NavCorner>
  </NavBar>
);

const ViewCube = () => (
  <Cube width="98" height="72" viewBox="0 0 98 72" fill="none">
    <ellipse cx="48" cy="49" rx="39" ry="16" stroke="#f4f4f5" strokeWidth="9" />
    <ellipse cx="48" cy="49" rx="44" ry="19" stroke="#c4c4c7" strokeDasharray="2 1" />
    <ellipse cx="48" cy="49" rx="34" ry="13" stroke="#cfcfd2" strokeDasharray="2 1" />
    <path d="M22 46l36 7 12-11 5 1-14 13-38-7z" fill="#dcdcde" />
    <g stroke="#85878c">
      <path d="M25 15l14-9 29 3-10 9z" fill="#f5f5f6" />
      <path d="M25 15l33 3v32l-31-4z" fill="#eeeeef" />
      <path d="M58 18l10-9-2 33-8 8z" fill="#e4e4e6" />
    </g>
    <g fill="#a9abb0" fontFamily="Noto Sans CJK SC, sans-serif">
      <text x="33" y="38" fontSize="18">前</text>
      <text x="43" y="16" fontSize="9">上</text>
      <text x="59" y="33" fontSize="8">右</text>
    </g>
    <g fill="#9a9ca0" fontSize="10" fontFamily="Noto Sans CJK SC, sans-serif">
      <text x="7" y="44">西</text>
      <text x="26" y="68">南</text>
      <text x="82" y="55">东</text>
    </g>
  </Cube>
);

type DocProps = KidsProps & { name: string; tools: [string, React.ReactNode][] };
const DocWindow = ({ name, tools, children }: DocProps) => (
  <Doc>
    <DocBar>
      <svg width="16" height="16" viewBox="0 0 16 16">
        <path d="M0 0h11l5 4v12H0z" fill="#16578f" />
        <path d="M1 1h9v3l4 1v4H1z" fill="#e9f3fa" />
        <path d="M0 9h16v7H0z" fill="#0b2d5c" />
        <text x="8" y="15" fontSize="6" fontWeight="700" textAnchor="middle" fill="#fff" fontFamily="Liberation Sans, sans-serif">
          RVT
        </text>
      </svg>
      <DocName>{name}</DocName>
      <DocButton aria-label="最小化">
        <svg width="12" height="9" viewBox="0 0 12 9">
          <path d="M2 6h9v3H2z" />
        </svg>
      </DocButton>
      <DocButton aria-label="最大化">
        <svg width="10" height="7" viewBox="0 0 10 7" fill="none" stroke="#000" strokeWidth="2">
          <path d="M1 1h8v5H1z" />
        </svg>
      </DocButton>
      <DocButton aria-label="关闭">
        <svg width="10" height="8" viewBox="0 0 10 8" stroke="#000" strokeWidth="2">
          <path d="M1 .5l8 7M9 .5l-8 7" />
        </svg>
      </DocButton>
    </DocBar>
    <DocFrame>
      <DocBody>
        <Canvas>{children}</Canvas>
        <Scroller dir="v" />
      </DocBody>
      <ViewBar>
        <Scale>1 : 100</Scale>
        {tools.map(([label, icon]) => (
          <ViewTool key={label} aria-label={label}>
            {icon}
          </ViewTool>
        ))}
        <Scroller dir="h" />
        <Grip>
          <svg width="9" height="9" viewBox="0 0 9 9" fill="#bcbcbf">
            <path d="M6 0h2v2H6zM6 3h2v2H6zM6 6h2v2H6zM3 3h2v2H3zM3 6h2v2H3zM0 6h2v2H0z" />
          </svg>
        </Grip>
      </ViewBar>
    </DocFrame>
  </Doc>
);

/* ---------- status bar ---------- */

const Status = styled.footer`
  display: flex;
  flex: none;
  align-items: flex-start;
  height: 18px;
  overflow: hidden;
  padding: 4px 81px 0 0;
  background: linear-gradient(#cfcfd1, #dcdcde);
  border-top: 1px solid #8a8a8d;
`;

const StatusText = styled.span<{ $w: number }>`
  flex: none;
  width: ${(p) => p.$w}px;
  line-height: 18px;
  white-space: nowrap;
  color: #111;
`;

const StatusSelect = styled.select<{ $w: number }>`
  appearance: none;
  flex: none;
  width: ${(p) => p.$w}px;
  height: 20px;
  margin-left: 4px;
  padding-left: 2px;
  line-height: 18px;
  color: #77777a;
  border: 1px solid #c3c3c5;
  background: #fbfbfb;
`;

const StatusChevron = styled.span`
  width: 9px;
  margin: 8px 5px 0 -14px;
  transform: rotate(180deg);
  opacity: 0.5;
  pointer-events: none;
`;

const StatusTool = styled.button<{ $w: number; $off?: boolean }>`
  display: flex;
  flex: none;
  justify-content: center;
  width: ${(p) => p.$w}px;
  height: 18px;
  opacity: ${(p) => (p.$off ? 0.5 : 1)};
`;

const Fill = styled.span`
  flex: 1;
`;

const Pointer = styled.svg`
  position: absolute;
  left: 1033px;
  top: 129px;
`;

/* ---------- data ---------- */

type Row = { n: string; v?: string; k?: "dim" | "btn" | "check" | "scale" };

const GRAPHICS: Row[] = [
  { n: "视图比例", v: "1 : 100", k: "scale" },
  { n: "比例值 1:", v: "100", k: "dim" },
  { n: "显示模型", v: "标准" },
  { n: "详细程度", v: "精细" },
  { n: "零件可见性", v: "显示原状态" },
  { n: "可见性/图形替换", v: "编辑...", k: "btn" },
  { n: "图形显示选项", v: "编辑...", k: "btn" },
  { n: "基线", v: "无" },
  { n: "基线方向", v: "平面" },
  { n: "方向", v: "项目北" },
  { n: "墙连接显示", v: "清理所有墙连...", k: "dim" },
  { n: "规程", v: "电气" },
  { n: "显示隐藏线", v: "按规程" },
  { n: "颜色方案位置", v: "背景" },
  { n: "颜色方案", v: "<无>", k: "btn" },
  { n: "系统颜色方案", v: "编辑...", k: "btn" },
  { n: "默认分析显示...", v: "无" },
  { n: "子规程", v: "电力" },
  { n: "日光路径", k: "check" },
];
const EXTENTS: Row[] = [{ n: "裁剪视图", k: "check" }];

const TABS = ["建筑", "结构", "系统", "插入", "注释", "分析", "体量和场地", "协作", "视图", "管理", "附加模块", "轻量化", "Modelo", "Extensions", "修改"];

const PLAN_TOOLS: [string, React.ReactNode][] = [
  ["详细程度", V.detail],
  ["视觉样式", V.box],
  ["日光路径", V.sun],
  ["阴影", V.shadow],
  ["裁剪视图", V.crop],
  ["显示裁剪区域", V.cropShow],
  ["临时隐藏", V.glasses],
  ["显示隐藏图元", V.bulb],
  ["临时视图属性", V.temp],
  ["显示约束", V.constrain],
];
const MODEL_TOOLS: [string, React.ReactNode][] = [
  ["详细程度", V.detail],
  ["视觉样式", V.boxBlue],
  ["日光路径", V.sun],
  ["阴影", V.shadow],
  ["渲染", V.render],
  ["裁剪视图", V.crop],
  ["显示裁剪区域", V.cropShow],
  ["锁定三维视图", V.lock3d],
  ["临时隐藏", V.glasses],
  ["显示隐藏图元", V.bulb],
  ["临时视图属性", V.temp],
  ["位移集", V.displace],
  ["显示约束", V.constrain],
];

const PropRow = ({ row }: { row: Row }) => {
  const dim = row.k === "dim";
  const Cell = row.k === "scale" ? ScaleCell : ValueCell;
  return (
    <tr>
      <NameCell scope="row" $dim={dim}>
        {row.n}
      </NameCell>
      <Cell $dim={dim}>
        {row.k === "scale" && <ScaleInput aria-label={row.n} defaultValue={row.v} />}
        {row.k === "btn" && <CellButton>{row.v}</CellButton>}
        {row.k === "check" && <Check type="checkbox" aria-label={row.n} />}
        {(dim || !row.k) && row.v}
      </Cell>
    </tr>
  );
};

const PropGroup = ({ name, rows }: { name: string; rows: Row[] }) => (
  <tbody>
    <tr>
      <GroupCell colSpan={2}>
        <GroupButton>
          {name}
          <svg width="7" height="9" viewBox="0 0 7 9" fill="none" stroke="#000" strokeWidth="1.300">
            <path d="M1 4l2.500-2.500L6 4M1 8l2.500-2.500L6 8" />
          </svg>
        </GroupButton>
      </GroupCell>
    </tr>
    {rows.map((r) => (
      <PropRow key={r.n} row={r} />
    ))}
  </tbody>
);

const statusArrow = <path d="M8 6v9l2-2 2 3 2-1-2-3h3z" fill="#fff" />;
const SELECT_TOOLS: [string, React.ReactNode][] = [
  ["选择链接", <path key="a" d="M1 5q0-3 4-3t4 3-4 3-4-3zM4 5h7" stroke="#d9a21f" strokeWidth="2" />],
  ["选择基线图元", <path key="b" d="M1 8h9M1 12h9M2 8l6-6v8" stroke="#2877b5" />],
  ["选择锁定图元", <path key="c" d="M2 1h8v3H2zM4 4h4v5H4zM1 9h10v3H1z" fill="#f9c08a" stroke="#c4662a" />],
  ["按面选择图元", <path key="d" d="M1 4l6-3v12l-6 2z" fill="#b7dcf5" stroke="#2877b5" />],
  ["选择时拖曳", <path key="e" d="M6 1v10M1 6h10M4 3l2-2 2 2M4 9l2 2 2-2M3 4L1 6l2 2M9 4l2 2-2 2" />],
];

/* ---------- page sections ---------- */

const TitleArea = () => (
  <Head>
    <AppButton aria-label="应用程序菜单">
      <svg width="25" height="36" viewBox="0 0 25 36">
        <path d="M4 0h14q2 5-2 9l-2 2 9 11-8 2-6-8-2 9-5-1H2z" fill="#2350a0" />
        <path d="M4 0h6L8 12q-1 8-3 12H2z" fill="#16326e" />
        <path d="M10 11l13 11-8 2-6-8z" fill="#1b3f88" />
        <path d="M10 0q5 3 1 8z" fill="#4d79c0" />
      </svg>
      <Caret $size={4} />
    </AppButton>
    <HeadColumn>
      <TitleBar>
        <ToolGroup>
          <SelectWrap>
            <ViewSelect aria-label="当前视图">
              <option>楼层平面</option>
            </ViewSelect>
            <SelectCaret $size={4} />
          </SelectWrap>
          <Slot $w={26} aria-label="切换窗口">{Q.link}</Slot>
          <Drop w={8} label="切换窗口选项" />
          <Divider $w={12} />
          <Slot $w={20} aria-label="打开">{Q.open}</Slot>
          <Slot $w={28} aria-label="保存">{Q.save}</Slot>
          <Slot $w={20} aria-label="同步">{Q.sync}</Slot>
          <Drop w={14} label="同步选项" />
          <Slot $w={24} aria-label="放弃">{Q.undo}</Slot>
          <Drop w={12} label="放弃列表" />
          <Slot $w={22} aria-label="重做">{Q.redo}</Slot>
          <Drop w={14} label="重做列表" />
          <Divider $w={8} />
          <Slot $w={20} aria-label="测量">{Q.measure}</Slot>
          <Drop w={16} label="测量选项" />
          <Slot $w={24} aria-label="对齐标注">{Q.dim}</Slot>
          <Slot $w={22} aria-label="标记">{Q.tag}</Slot>
          <Slot $w={24} aria-label="文字">{Q.text}</Slot>
          <Divider $w={8} />
          <Slot $w={22} aria-label="默认三维视图">{Q.home}</Slot>
          <Drop w={14} label="三维视图选项" />
          <Slot $w={22} aria-label="剖面">{Q.section}</Slot>
          <Slot $w={26} $on aria-label="细线">{Q.thin}</Slot>
          <Divider $w={6} />
          <Slot $w={24} aria-label="关闭隐藏窗口">{Q.closeHidden}</Slot>
          <Slot $w={18} aria-label="自定义工具栏">
            <svg width="8" height="7" viewBox="0 0 8 7" fill="#222">
              <path d="M0 0h8v1H0zM0 3h8L4 7z" />
            </svg>
          </Slot>
        </ToolGroup>
        <DocTitle>项目1</DocTitle>
        <ToolGroup>
          <Slot $w={14} aria-label="收拢">
            <svg width="4" height="8" viewBox="0 0 4 8">
              <path d="M4 0v8L0 4z" />
            </svg>
          </Slot>
          <Slot $w={24} aria-label="搜索">{Q.binoculars}</Slot>
          <Slot $w={22} aria-label="通讯中心">{Q.satellite}</Slot>
          <Slot $w={26} aria-label="收藏夹">{Q.star}</Slot>
          <Slot $w={24} aria-label="账户">{Q.user}</Slot>
          <SignIn>登录</SignIn>
          <Drop w={16} label="登录选项" />
          <Slot $w={24} aria-label="应用商店">{Q.exchange}</Slot>
          <Divider $w={10} />
          <Slot $w={26} aria-label="帮助">{Q.help}</Slot>
          <Drop w={11} label="帮助选项" />
        </ToolGroup>
        <WinControls>
          <WinControl aria-label="最小化">
            <svg width="8" height="2" viewBox="0 0 8 2">
              <path d="M0 0h8v2H0z" />
            </svg>
          </WinControl>
          <WinControl aria-label="还原">
            <svg width="10" height="2" viewBox="0 0 10 2">
              <path d="M0 0h1v1h8V0h1v2H0z" />
            </svg>
          </WinControl>
          <WinControl $close aria-label="关闭程序">
            <svg width="8" height="3" viewBox="0 0 8 3" stroke="#fff" strokeWidth="2">
              <path d="M4-1L0 3M4-1l4 4" />
            </svg>
          </WinControl>
        </WinControls>
      </TitleBar>
      <TabList>
        {TABS.map((t) => (
          <Tab key={t} $active={t === "系统"}>
            {t}
          </Tab>
        ))}
        <Minimize aria-label="最小化功能区">
          <svg width="15" height="9" viewBox="0 0 15 9" fill="#f0f0f0" stroke="#333">
            <rect x=".5" y=".5" width="14" height="8" rx="2" />
            <path d="M5 6l2.500-3L10 6z" fill="#333" stroke="none" />
          </svg>
          <Caret />
        </Minimize>
      </TabList>
    </HeadColumn>
  </Head>
);

const RibbonArea = () => (
  <Ribbon>
    <Panel>
      <PanelBody $pl={3} $pr={5}>
        <Big icon={L.cursor} w={38} label="修改" tone="blue" />
      </PanelBody>
      <SelectTitle>
        选择
        <Caret $size={4} />
      </SelectTitle>
    </Panel>
    <RibbonPanel name="HVAC" launch pr={2}>
      <Big icon={L.duct} w={40} label="风管" />
      <Big icon={L.ductPh} w={40} label={"风管\n占位符"} />
      <SmallList $w={112} $pl={6}>
        <Small icon={S.ductFitting} label="风管 管件" />
        <Small icon={S.ductAccessory} label="风管 附件" />
        <Small icon={S.convert} label="转换为 软风管" />
      </SmallList>
      <Rule />
      <Big icon={L.flexDuct} w={38} label={"软\n风管"} />
      <Big icon={L.terminal} w={38} label={"风道\n末端"} />
    </RibbonPanel>
    <RibbonPanel name="预制" launch pr={1}>
      <Big icon={L.fab} w={44} label={"预制\n零件"} />
    </RibbonPanel>
    <RibbonPanel name="机械" launch pr={1}>
      <Big icon={L.fan} w={44} label={"机械\n设备"} />
    </RibbonPanel>
    <RibbonPanel name="卫浴和管道" launch pr={2}>
      <Big icon={L.pipe} w={40} label="管道" />
      <Big icon={L.pipePh} w={40} label={"管道\n占位符"} />
      <Big icon={L.parallelPipe} w={40} label={"平行\n管道"} />
      <SmallList $w={86} $pl={4}>
        <Small icon={S.pipeFitting} label="管 件" />
        <Small icon={S.pipeAccessory} label="管路 附件" />
        <Small icon={S.flexPipe} label="软 管" />
      </SmallList>
      <Rule />
      <Big icon={L.toilet} w={38} label={"卫浴\n装置"} />
      <Big icon={L.sprinkler} w={38} label="喷头" />
    </RibbonPanel>
    <RibbonPanel name="电气" launch pr={2}>
      <Big icon={L.wire} w={48} label="导线" drop />
      <Rule $before={4} />
      <Big icon={L.tray} w={38} label={"电缆\n桥架"} />
      <Big icon={L.conduit} w={38} label="线管" />
      <Big icon={L.parallelConduit} w={38} label={"平行\n线管"} />
      <Big icon={L.trayFitting} w={56} label={"电缆桥架\n配件"} />
      <Big icon={L.conduitFitting} w={36} label={"线管\n配件"} />
      <Rule $before={6} />
      <Big icon={L.elecEquip} w={38} label={"电气\n设备"} />
      <Big icon={L.shield} w={46} label="设备" drop />
      <Big icon={L.light} w={38} label={"照明\n设备"} />
    </RibbonPanel>
    <RibbonPanel name="模型" pr={1}>
      <Big icon={L.component} w={48} label="构件" drop />
    </RibbonPanel>
    <RibbonPanel name="工作平面" pl={1}>
      <Big icon={L.workplane} w={38} label="设置" tone="cyan" />
      <SmallList $w={26} $pl={5}>
        <SmallButton aria-label="显示工作平面">{S.showPlane}</SmallButton>
        <SmallButton aria-label="参照平面">{S.refPlane}</SmallButton>
        <SmallButton aria-label="工作平面查看器">{S.viewer}</SmallButton>
      </SmallList>
    </RibbonPanel>
  </Ribbon>
);

const Turned = styled.span`
  display: block;
  transform: rotate(180deg);
`;

const Properties = () => (
  <Palette>
    <PaletteTitle>
      属性
      <button aria-label="关闭属性">
        <svg width="9" height="9" viewBox="0 0 9 9" stroke="#000" strokeWidth="1.600">
          <path d="M1 1l7 7M8 1L1 8" />
        </svg>
      </button>
    </PaletteTitle>
    <TypeSelector>
      <Preview>
        <svg width="32" height="32" viewBox="0 0 32 32" fill="none" stroke={INK} strokeWidth="1.200">
          <path d="M1 2h18v3h10v9H12v15H1z" fill="#e2e2e4" stroke="none" />
          <path d="M19 2H1v27h11M19 5h10v8" />
          <path d="M12 13h18v18H12z" fill="#f0f0f1" stroke="none" />
          <path d="M30 13v18H12" />
          <path d="M12 31V13h18M19 2v11" strokeDasharray="2 2" />
        </svg>
      </Preview>
      <TypeName>楼层平面</TypeName>
      <Caret $size={4} />
    </TypeSelector>
    <InstanceRow>
      <InstanceSelect aria-label="实例">
        <option>楼层平面: 1 - 电力</option>
      </InstanceSelect>
      <ChevronSlot>
        <Turned>
          <Chevron w={1} />
        </Turned>
      </ChevronSlot>
      <EditType>
        <Ico>
          <path d="M1 2l1-1h5v6H1zM9 2l1-1h5v6M9 2v5M1 9h6v6H1zM1 9l1-1" fill="#fafafa" />
          <rect x="9" y="6" width="6" height="9" fill="#fff" />
          <path d="M11 9h2v1h-2z" stroke="#2877b5" />
          <path d="M11 13h2" />
        </Ico>
        编辑类型
      </EditType>
    </InstanceRow>
    <ScrollPane>
      <TableClip>
        <PropTable>
          <colgroup>
            <NameColumn />
            <col />
          </colgroup>
          <PropGroup name="图形" rows={GRAPHICS} />
          <PropGroup name="范围" rows={EXTENTS} />
        </PropTable>
      </TableClip>
      <Scroller dir="v" grow />
    </ScrollPane>
    <PaletteFoot>
      <HelpLink href="#help">属性帮助</HelpLink>
      <Apply disabled>应用</Apply>
    </PaletteFoot>
  </Palette>
);

const StatusBar = () => (
  <Status>
    <StatusText $w={370}>关闭</StatusText>
    <StatusTool $w={24} aria-label="工作集">
      <Ico>
        <path d="M5 3l4-2 4 2v3l-4 2-4-2z" fill="#9bd08f" stroke="#2f7a2a" />
        <path d="M0 8l4-2 4 2v5l-4 2-4-2z" fill="#b7dcf5" stroke="#2877b5" />
        <path d="M11 6v9M9 7v3h4V7" />
      </Ico>
    </StatusTool>
    <StatusSelect $w={205} aria-label="活动工作集" />
    <StatusChevron>
      <Chevron w={2} />
    </StatusChevron>
    <StatusTool $w={30} $off aria-label="可编辑请求">
      <Ico>
        <path d="M3 2h10v5H7l-3 7 1-7H3z" fill="#f2f2f2" />
      </Ico>
    </StatusTool>
    <StatusText $w={28}>:0</StatusText>
    <StatusTool $w={24} aria-label="设计选项">
      <Ico>
        <rect x="1" y="1" width="14" height="13" fill="#fafafa" />
        <path d="M1 3h14" strokeWidth="2" />
        <path d="M3 7h2M3 11h2M7 7h6M7 11h6" />
      </Ico>
    </StatusTool>
    <StatusTool $w={26} $off aria-label="拾取以进行编辑">
      <Ico>
        <rect width="15" height="15" x="1" fill="#8a8c90" stroke="none" />
        <path d="M3 3l7 8M10 6v5H6" stroke="#555" />
      </Ico>
    </StatusTool>
    <StatusSelect $w={155} aria-label="设计选项集">
      <option>主模型</option>
    </StatusSelect>
    <StatusChevron>
      <Chevron w={2} />
    </StatusChevron>
    <Fill />
    {SELECT_TOOLS.map(([label, art]) => (
      <StatusTool key={label} $w={26} aria-label={label}>
        <Ico>
          {art}
          {statusArrow}
          <RedCross x={9} y={1} />
        </Ico>
      </StatusTool>
    ))}
    <StatusTool $w={20} aria-label="过滤器">
      <Ico>
        <path d="M0 2h16l-6 6v7H6V8z" fill="url(#steel)" />
      </Ico>
    </StatusTool>
    <StatusText $w={12}>:0</StatusText>
  </Status>
);

export default function App() {
  return (
    <Shell>
      <Global />
      <Gradients />
      <TitleArea />
      <RibbonArea />
      <OptionsBar />
      <Workspace>
        <Properties />
        <Documents>
          <DocWindow name="楼层平面: 1 - 电力 - 项目1" tools={PLAN_TOOLS}>
            <Drawing viewBox="0 0 496 476" fill="none" stroke="#000" shapeRendering="crispEdges">
              <rect x="117.500" y="141.500" width="265" height="222" />
            </Drawing>
            <Nav top={1} flat />
          </DocWindow>
          <DocWindow name="三维视图: {三维} - 项目1" tools={MODEL_TOOLS}>
            <Drawing viewBox="0 0 496 476" stroke="#000" strokeLinejoin="round">
              <path d="M188 158l141 18-41 42-140-18z" fill="#808080" />
              <path d="M148 200l140 18v254l-140-18z" fill="#404040" />
              <path d="M288 218l41-42v254l-41 42z" fill="#7e7e7e" />
            </Drawing>
            <ViewCube />
            <Nav top={116} />
          </DocWindow>
        </Documents>
      </Workspace>
      <StatusBar />
      <Pointer width="13" height="21" viewBox="0 0 13 21" fill="#fff" stroke="#222">
        <path d="M1 1v15l3.500-3.500L7 19l2.500-1L7 12h5z" />
      </Pointer>
    </Shell>
  );
}
